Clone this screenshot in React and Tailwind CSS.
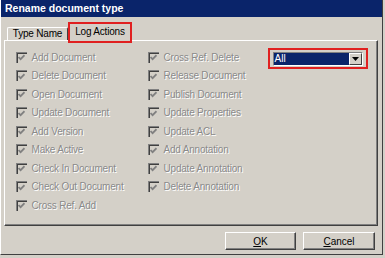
import React from "react";

const leftItems = [
  "Add Document",
  "Delete Document",
  "Open Document",
  "Update Document",
  "Add Version",
  "Make Active",
  "Check In Document",
  "Check Out Document",
  "Cross Ref. Add",
];

const rightItems = [
  "Cross Ref. Delete",
  "Release Document",
  "Publish Document",
  "Update Properties",
  "Update ACL",
  "Add Annotation",
  "Update Annotation",
  "Delete Annotation",
];

function CheckRow({ label }) {
  return (
    <div className="flex items-center h-[18.5px] gap-[5px]">
      <div className="w-[11px] h-[11px] bg-[#d4d0c8] border-t border-l border-[#808080] border-r-white border-b-white shadow-[inset_1px_1px_0_#404040] flex items-center justify-center">
        <svg width="7" height="7" viewBox="0 0 7 7">
          <polyline points="0.5,3 2.6,5.2 6.5,1.2" fill="none" stroke="#808080" strokeWidth="1.8" />
        </svg>
      </div>
      <span className="text-[10px] tracking-[-0.2px] text-[#8a8a8a] [text-shadow:1px_1px_0_#ffffff] whitespace-nowrap">
        {label}
      </span>
    </div>
  );
}

function Button({ first, rest, width }) {
  return (
    <button
      className={`${width} h-[18px] bg-[#d4d0c8] border-t border-l border-white border-r border-b border-r-[#404040] border-b-[#404040] shadow-[inset_-1px_-1px_0_#808080] text-[10px] text-black flex items-center justify-center`}
    >
      <span>
        <span className="underline">{first}</span>
        {rest}
      </span>
    </button>
  );
}

export default function App() {
  return (
    <div
      className="w-[385px] h-[258px] bg-[#d4d0c8] overflow-hidden"
      style={{ fontFamily: '"Liberation Sans", Arial, sans-serif' }}
    >
      <div className="w-[383px] h-[255px] border-r border-b border-[#404040] border-l border-l-white flex flex-col">
        <div className="h-[17px] bg-[#0a246a] text-white font-bold text-[10.5px] leading-[17px] pl-[4px]">
          Rename document type
        </div>

        <div className="pl-[3px] pt-[5px]">
          <div className="flex items-end h-[18px] pl-[3px]">
            <div className="w-[61px] h-[13px] bg-[#d4d0c8] border-t border-l border-white border-r border-r-[#404040] rounded-t-[2px] text-[10px] tracking-[-0.2px] leading-[12px] text-black flex justify-center">
              Type Name
            </div>
            <div className="relative z-10 w-[64px] h-[21px] -mb-[3px] border-2 border-[#e02020] self-start">
              <div className="h-full bg-[#d4d0c8] text-[10px] tracking-[-0.2px] leading-[15px] text-black flex justify-center">
                Log Actions
              </div>
            </div>
          </div>

          <div className="w-[374px] h-[186px] border-t border-l border-white border-r border-b border-r-[#404040] border-b-[#404040] shadow-[inset_-1px_-1px_0_#808080] pt-[7px] pl-[10.5px] flex">
            <div className="w-[132px] flex flex-col">
              {leftItems.map((l) => (
                <CheckRow key={l} label={l} />
              ))}
            </div>
            <div className="w-[120px] flex flex-col">
              {rightItems.map((l) => (
                <CheckRow key={l} label={l} />
              ))}
            </div>
            <div className="self-start w-[100px] h-[21px] border-2 border-[#e02020] pl-[3px] pt-[2px]">
              <div className="w-[90px] h-[14px] bg-white border-t border-l border-[#808080] border-r border-b border-r-white border-b-white flex">
                <div className="flex-1 bg-[#0a246a] text-white text-[10px] leading-[12px] pl-[1px]">All</div>
                <div className="w-[13px] h-full bg-[#d4d0c8] border-t border-l border-white border-r border-b border-r-[#404040] border-b-[#404040] flex items-center justify-center">
                  <svg width="7" height="4" viewBox="0 0 7 4">
                    <polygon points="0,0 7,0 3.5,4" fill="#000" />
                  </svg>
                </div>
              </div>
            </div>
          </div>
        </div>

        <div className="flex justify-end gap-[7px] pr-[7px] mt-[6px]">
          <Button first="O" rest="K" width="w-[71px]" />
          <Button first="C" rest="ancel" width="w-[72px]" />
        </div>
      </div>
    </div>
  );
}
